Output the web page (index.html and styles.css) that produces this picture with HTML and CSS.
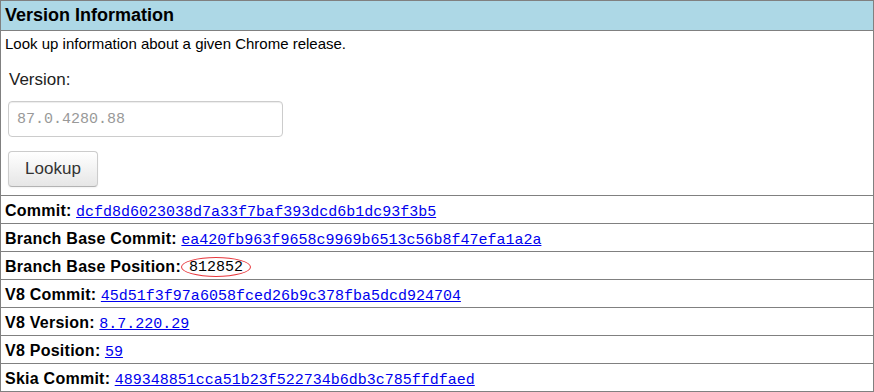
FILE: index.html
```html
<!DOCTYPE html>
<html>
<head>
	<meta charset="utf-8">
	<title>Version Information</title>
	<link rel="stylesheet" href="styles.css">
</head>
<body>
	<div class="panel">
		<h2 class="panel-title">Version Information</h2>
		<div class="lookup">
			<p class="desc">Look up information about a given Chrome release.</p>
			<form class="lookup-form">
				<label for="version">Version:</label>
				<input type="text" id="version" placeholder="87.0.4280.88">
				<button type="button">Lookup</button>
			</form>
		</div>
		<div class="row"><b>Commit:</b> <a href="#">dcfd8d6023038d7a33f7baf393dcd6b1dc93f3b5</a></div>
		<div class="row"><b>Branch Base Commit:</b> <a href="#">ea420fb963f9658c9969b6513c56b8f47efa1a2a</a></div>
		<div class="row"><b>Branch Base Position:</b><span class="circled">812852</span></div>
		<div class="row"><b>V8 Commit:</b> <a href="#">45d51f3f97a6058fced26b9c378fba5dcd924704</a></div>
		<div class="row"><b>V8 Version:</b> <a href="#">8.7.220.29</a></div>
		<div class="row"><b>V8 Position:</b> <a href="#">59</a></div>
		<div class="row"><b>Skia Commit:</b> <a href="#">489348851cca51b23f522734b6db3c785ffdfaed</a></div>
	</div>
</body>
</html>
```

FILE: styles.css
```css
* {
	margin: 0;
	padding: 0;
	box-sizing: border-box;
}

body {
	font-family: "Liberation Sans", Arial, sans-serif;
	color: #000;
	background: white;
}

.panel {
	width: 874px;
	border: 1px solid #808080;
}

.panel-title {
	background: #ADD8E6;
	border-bottom: 1px solid #808080;
	height: 30px;
	line-height: 29px;
	padding: 0 4px;
	font-size: 18px;
	font-weight: bold;
}

.lookup {
	padding: 4px 0 7px 0;
	height: 164px;
}

.desc {
	font-size: 15px;
	line-height: 17px;
	padding-left: 4px;
}

.lookup-form {
	padding-left: 7px;
}

.lookup-form label {
	display: block;
	font-size: 17px;
	line-height: 20px;
	margin-top: 18px;
	padding-left: 1px;
	color: #222;
}

.lookup-form input {
	display: block;
	margin-top: 11px;
	width: 275px;
	height: 36px;
	padding: 0 8px;
	border: 1px solid #ccc;
	border-radius: 4px;
	box-shadow: inset 0 1px 1px rgba(0, 0, 0, 0.075);
	font-family: "Liberation Mono", monospace;
	font-size: 15px;
	color: #555;
}

.lookup-form input::placeholder {
	color: #999;
}

.lookup-form button {
	display: block;
	margin-top: 14px;
	width: 90px;
	height: 36px;
	border: 1px solid #ccc;
	border-bottom-color: #b3b3b3;
	border-radius: 4px;
	background: linear-gradient(#ffffff, #e6e6e6);
	box-shadow: 0 1px 2px rgba(0, 0, 0, 0.05);
	font-family: "Liberation Sans", Arial, sans-serif;
	font-size: 17px;
	color: #333;
}

.row {
	border-top: 1px solid #808080;
	height: 28px;
	line-height: 27px;
	padding: 1px 4px 0 4px;
	font-size: 16px;
	white-space: nowrap;
}

.row b {
	letter-spacing: 0.25px;
}

.row a {
	font-family: "Liberation Mono", monospace;
	font-size: 15px;
	color: #0000EE;
}

.circled {
	display: inline-block;
	font-family: "Liberation Mono", monospace;
	font-size: 15px;
	line-height: 16px;
	padding: 2px 7px 0 7px;
	border: 1px solid #e8383d;
	border-radius: 50%;
	vertical-align: 1px;
}
```
